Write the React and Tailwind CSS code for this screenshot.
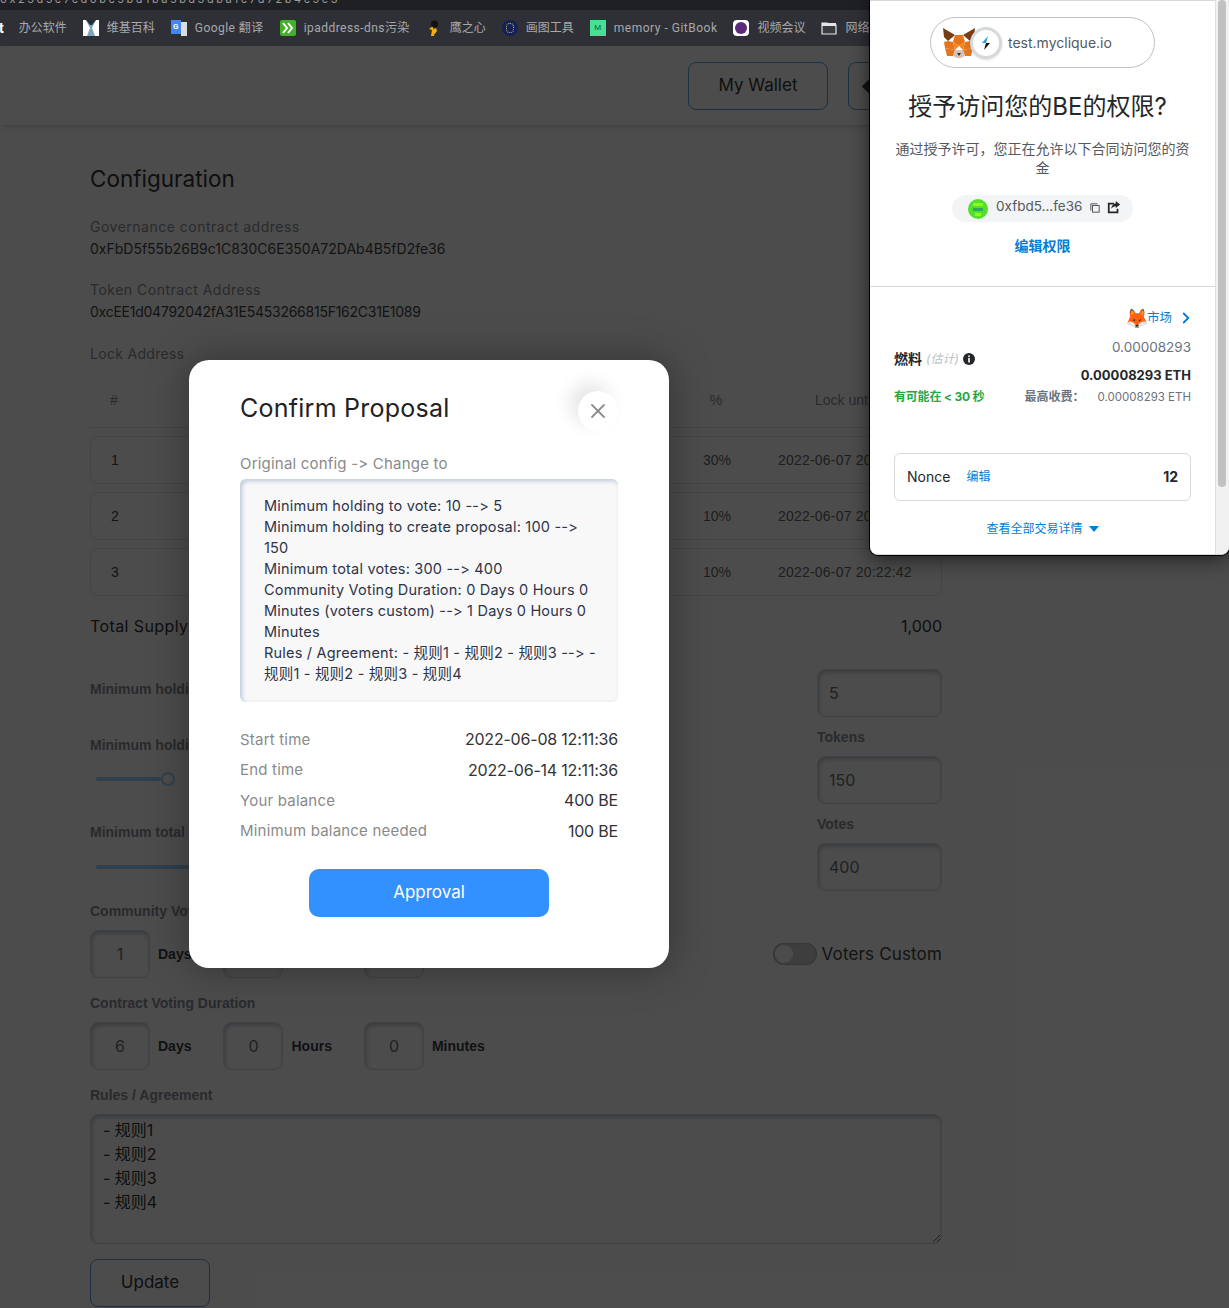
import React from 'react'
import { X, ChevronRight } from 'lucide-react'

const poppins = { fontFamily: 'Inter, "Noto Sans CJK SC", sans-serif', fontVariantLigatures: 'none', fontFeatureSettings: '"calt" 0' }

const Fox = ({ className }) => (
  <svg viewBox="0 0 32 30" className={className}>
    <polygon points="0,0 12,7 5,13 1,9" fill="#763d16" />
    <polygon points="32,0 20,7 27,13 31,9" fill="#763d16" />
    <polygon points="12,7 20,7 22,14 16,18 10,14" fill="#e4761b" />
    <polygon points="5,13 10,14 12,22 2,20 1,14" fill="#e2761b" />
    <polygon points="27,13 22,14 20,22 30,20 31,14" fill="#e2761b" />
    <polygon points="10,14 16,18 12,22" fill="#f6851b" />
    <polygon points="22,14 16,18 20,22" fill="#f6851b" />
    <polygon points="2,20 12,22 10,28 4,28" fill="#e4751f" />
    <polygon points="30,20 20,22 22,28 28,28" fill="#e4751f" />
    <polygon points="10,28 12,22 20,22 22,28 18,30 14,30" fill="#d7c1b3" />
    <polygon points="14,25 18,25 16,28" fill="#233447" />
  </svg>
)

const bookmarks = [
  { label: '办公软件' },
  {
    label: '维基百科',
    icon: (
      <svg viewBox="0 0 16 16" className="w-4 h-4">
        <rect width="16" height="16" fill="#fff" />
        <polygon points="3,0 13,0 9,8 12,16 4,16 7,8" fill="#7fa3b8" />
        <polygon points="3,0 13,0 9,5 7,5" fill="#22303a" />
      </svg>
    ),
  },
  {
    label: 'Google 翻译',
    cls: 'tracking-[0.45px]',
    icon: (
      <span className="w-4 h-4 flex">
        <span className="w-2.5 h-3.5 bg-[#4285f4] text-white text-[8px] font-bold leading-[14px] text-center">G</span>
        <span className="w-1.5 h-3.5 mt-0.5 bg-[#dcdcdc]" />
      </span>
    ),
  },
  {
    label: 'ipaddress-dns污染',
    cls: 'tracking-[0.45px]',
    icon: (
      <svg viewBox="0 0 16 16" className="w-4 h-4">
        <rect width="16" height="16" rx="2" fill="#43b02a" />
        <path d="M3 3l4 5-4 5M8 3l4 5-4 5" fill="none" stroke="#fff" strokeWidth="2" />
      </svg>
    ),
  },
  {
    label: '鹰之心',
    icon: (
      <svg viewBox="0 0 16 16" className="w-4 h-4">
        <path d="M5 16l1-6-3-1 4-3 1 10z" fill="#f5b015" />
        <path d="M6 10l4-2 1 3-3 4z" fill="#f5b015" />
        <circle cx="8.500" cy="4" r="3.500" fill="#111" />
      </svg>
    ),
  },
  {
    label: '画图工具',
    icon: (
      <span className="w-4 h-4 rounded-full bg-[#15205a] flex items-center justify-center">
        <span className="w-2 h-2.5 rounded-full border border-dotted border-[#d8d832]" />
      </span>
    ),
  },
  { label: 'memory - GitBook', cls: 'tracking-[0.5px]', icon: <span className="w-4 h-4 bg-[#45e094] text-[#0d6b3f] text-[8px] leading-4 text-center">M</span> },
  { label: '视频会议', icon: <span className="w-4 h-4 rounded bg-white flex items-center justify-center"><span className="w-3 h-3 rounded-full bg-[#5b2a78]" /></span> },
  {
    label: '网络',
    icon: (
      <svg viewBox="0 0 16 14" className="w-4 h-4">
        <path d="M1 2h5l1.500 2H15v9H1z" fill="#3a3b40" stroke="#e5e5e5" strokeWidth="1.200" />
        <rect x="1" y="2" width="14" height="3" fill="#e5e5e5" />
      </svg>
    ),
  },
]

const rows = [
  { id: 1, pct: '30%', date: '2022-06-07 20:22:42' },
  { id: 2, pct: '10%', date: '2022-06-07 20:22:42' },
  { id: 3, pct: '10%', date: '2022-06-07 20:22:42' },
]

const inputClass =
  'h-12 bg-white border border-[#d8dbe0] rounded-lg shadow-[inset_1px_2px_4px_rgba(90,110,140,0.45)] text-[#6b6f76] text-base outline-none'

const Slider = ({ value }) => (
  <div className="relative h-[14px] w-[560px] ml-[6px] flex items-center">
    <div className="h-1 rounded-full bg-[#9ed4ff]" style={{ width: value }} />
    <div className="w-[14px] h-[14px] rounded-full bg-white border-2 border-[#9ed4ff] shrink-0" />
  </div>
)

const Duration = ({ day, hour, minute }) => (
  <div className="flex items-center gap-8">
    {[
      [day, 'Days'],
      [hour, 'Hours'],
      [minute, 'Minutes'],
    ].map(([val, unit]) => (
      <div key={unit} className="flex items-center gap-2">
        <input readOnly value={val} className={`${inputClass} w-[60px] text-center`} style={poppins} />
        <span className="text-sm font-bold text-[#3a3d4a]" style={{ fontFamily: '"Liberation Sans", sans-serif' }}>
          {unit}
        </span>
      </div>
    ))}
  </div>
)

const Label = ({ children, className = '' }) => (
  <div
    className={`text-sm leading-4 font-bold text-[#8b8e96] ${className}`}
    style={{ fontFamily: '"Liberation Sans", sans-serif' }}
  >
    {children}
  </div>
)

const Page = () => (
  <div className="h-[1262px] bg-white text-[#3a3f4d]" style={poppins}>
    <div className="h-[79px] pl-[688px] pt-4 flex gap-5 shadow-md overflow-hidden">
      <button className="w-[140px] h-12 shrink-0 rounded-lg border border-[#5b9de8] text-[17px] text-[#333]">My Wallet</button>
      <button className="w-[140px] h-12 shrink-0 rounded-lg border border-[#5b9de8] pl-3 text-left">◆</button>
    </div>

    <div className="w-[852px] ml-[90px] pt-[38px]">
      <h1 className="text-[22.500px] leading-8 text-[#333]">Configuration</h1>
      <div className="mt-[22px] text-sm leading-5 text-[#8b8e96] tracking-[0.5px]">Governance contract address</div>
      <div className="mt-0.5 text-sm leading-5 text-[#444]">0xFbD5f55b26B9c1C830C6E350A72DAb4B5fD2fe36</div>
      <div className="mt-[21px] text-sm leading-5 text-[#8b8e96] tracking-[0.5px]">Token Contract Address</div>
      <div className="mt-0.5 text-sm leading-5 text-[#444] tracking-[-0.25px]">0xcEE1d04792042fA31E5453266815F162C31E1089</div>
      <div className="mt-[22px] text-sm leading-5 text-[#8b8e96] tracking-[0.3px]">Lock Address</div>

      <div
        className="mt-[17px] h-[47px] grid grid-cols-[564px_124px_164px] items-center border-b border-[#e8e8e8] pb-2 text-sm text-[#8b8e96]"
        style={{ fontFamily: '"Liberation Sans", sans-serif' }}
      >
        <span className="pl-5">#</span>
        <span className="text-center">%</span>
        <span className="pl-[37px]">Lock until</span>
      </div>
      <div className="mt-2 flex flex-col gap-2" style={{ fontFamily: '"Liberation Sans", sans-serif' }}>
        {rows.map((r) => (
          <div
            key={r.id}
            className="h-12 grid grid-cols-[564px_124px_164px] items-center rounded-lg border border-[#e4e4e4] text-sm text-[#444]"
          >
            <span className="pl-5">{r.id}</span>
            <span className="text-center text-[#666]">{r.pct}</span>
            <span className="-ml-px whitespace-nowrap tracking-[0.2px] text-[#666]">{r.date}</span>
          </div>
        ))}
      </div>

      <div className="mt-[18px] flex justify-between text-base leading-6 text-[#333]">
        <span className="tracking-[0.4px]">Total Supply</span>
        <span>1,000</span>
      </div>

      <div className="mt-[31px] flex justify-between">
        <div>
          <Label className="mt-3">Minimum holding to vote</Label>
          <Label className="mt-10">Minimum holding to create proposal</Label>
          <div className="mt-[19px]">
            <Slider value={65} />
          </div>
          <Label className="mt-[38px]">Minimum total votes</Label>
          <div className="mt-5">
            <Slider value={320} />
          </div>
        </div>
        <div className="w-[125px]">
          <input readOnly value="5" className={`${inputClass} w-full pl-[11px]`} style={poppins} />
          <Label className="mt-3">Tokens</Label>
          <input readOnly value="150" className={`${inputClass} w-full pl-[11px] mt-[11px]`} style={poppins} />
          <Label className="mt-3">Votes</Label>
          <input readOnly value="400" className={`${inputClass} w-full pl-[11px] mt-[11px]`} style={poppins} />
        </div>
      </div>

      <Label className="mt-3">Community Voting Duration</Label>
      <div className="mt-[11px] flex items-center justify-between">
        <Duration day="1" hour="0" minute="0" />
        <div className="flex items-center gap-[5px] text-[17px] text-[#444] tracking-[0.15px]">
          <div className="w-11 h-[22px] rounded-full bg-[#cfcfcf] p-0.5 shadow-[inset_0_0_2px_rgba(0,0,0,0.4)]">
            <div className="w-[18px] h-[18px] rounded-full bg-white" />
          </div>
          <span className="pt-[2px]">Voters Custom</span>
        </div>
      </div>

      <Label className="mt-[17px]">Contract Voting Duration</Label>
      <div className="mt-[11px]">
        <Duration day="6" hour="0" minute="0" />
      </div>

      <Label className="mt-[17px]">Rules / Agreement</Label>
      <textarea
        readOnly
        value={'- 规则1\n- 规则2\n- 规则3\n- 规则4'}
        className={`${inputClass} block mt-[11px] w-full h-[130px] px-3 pt-[3px] leading-6 text-[#333]`}
        style={poppins}
      />
      <button className="mt-[15px] w-[120px] h-12 rounded-lg border border-[#5b9de8] text-[17px] text-[#333]">Update</button>
    </div>
  </div>
)

const Modal = () => (
  <div
    className="absolute left-[189px] top-[314px] w-[480px] h-[608px] bg-white rounded-[20px] px-[51px] pt-[30px] shadow-[0_0_40px_rgba(0,0,0,0.35)]"
    style={poppins}
  >
    <div className="flex items-start justify-between">
      <h2 className="text-[25px] leading-9 tracking-[0.25px] text-[#222]">Confirm Proposal</h2>
      <div className="w-10 h-10 mt-[1px] rounded-full bg-white flex items-center justify-center shadow-[-8px_-8px_18px_rgba(0,0,0,0.1)]">
        <X size={24} strokeWidth={1.8} className="text-[#8c8c8c]" />
      </div>
    </div>
    <div className="mt-[23px] text-[15px] leading-5 text-[#8a8a8a] tracking-[0.2px]">Original config -&gt; Change to</div>
    <div className="mt-[5px] h-[223px] bg-[#f8f8f9] rounded-md pl-6 pr-[22px] pt-4 text-[14.500px] leading-[21px] tracking-[0.2px] text-[#2e3448] shadow-[inset_2px_2px_4px_rgba(100,130,170,0.4)]">
      Minimum holding to vote: 10 --&gt; 5
      <br />
      Minimum holding to create proposal: 100 --&gt; 150
      <br />
      Minimum total votes: 300 --&gt; 400
      <br />
      Community Voting Duration: 0 Days 0 Hours 0 Minutes (voters custom) --&gt; 1 Days 0 Hours 0 Minutes
      <br />
      Rules / Agreement: - 规则1 - 规则2 - 规则3 --&gt; - 规则1 - 规则2 - 规则3 - 规则4
    </div>
    <div className="mt-[26px] flex flex-col gap-[6.500px]">
      {[
        ['Start time', '2022-06-08 12:11:36'],
        ['End time', '2022-06-14 12:11:36'],
        ['Your balance', '400 BE'],
        ['Minimum balance needed', '100 BE'],
      ].map(([k, v]) => (
        <div key={k} className="flex justify-between items-center h-6">
          <span className="text-[15px] text-[#8a8a8a] tracking-[0.2px]">{k}</span>
          <span className="pb-[2px] text-base tracking-[-0.2px] text-[#333]">{v}</span>
        </div>
      ))}
    </div>
    <button className="block mx-auto mt-[25px] w-[240px] h-12 rounded-[10px] bg-[#3390ff] text-white text-[17px]">Approval</button>
  </div>
)

const WalletPopup = () => (
  <div
    className="absolute right-0 top-0 w-[359px] h-[555px] bg-white rounded-b-lg overflow-hidden flex shadow-[0_0_0_1px_#000,0_4px_20px_rgba(0,0,0,0.6)] border-b border-[#d6d9dc]"
    style={{ fontFamily: 'Inter, "Noto Sans CJK SC", sans-serif' }}
  >
    <div className="w-[345px] border-t border-[#d6d9dc] shrink-0 flex flex-col">
      <div className="h-[286px] border-b border-[#d6d9dc] flex flex-col items-center pt-4">
        <div className="w-[225px] h-[51px] rounded-full border border-[#bbc0c5] flex items-center pl-3">
          <Fox className="w-8 h-[30px]" />
          <div className="w-8 h-8 -ml-[5px] rounded-full bg-white border-[3px] border-[#d6d9dc] shadow flex items-center justify-center">
            <svg viewBox="0 0 16 16" className="w-4 h-4">
              <polygon points="10,1 4,8 8,8" fill="#1c9bf0" />
              <polygon points="8,8 12,8 6,15" fill="#111" />
            </svg>
          </div>
          <span className="ml-[6px] text-sm text-[#535a61]">test.myclique.io</span>
        </div>
        <h3 className="mt-[23px] pr-[10px] text-2xl leading-8 text-[#24272a]">授予访问您的BE的权限?</h3>
        <p className="mt-4 w-[296px] text-center text-sm leading-[19px] text-[#535a61]">
          通过授予许可，您正在允许以下合同访问您的资金
        </p>
        <div className="mt-[18px] w-[181px] h-[27px] rounded-full bg-[#f2f4f6] flex items-center pl-4">
          <svg viewBox="0 0 20 20" className="w-5 h-5">
            <circle cx="10" cy="10" r="10" fill="#52e02c" />
            <rect x="5" y="4" width="10" height="3" fill="#8dfa1e" />
            <rect x="5" y="9" width="10" height="3" fill="#2ea85c" />
            <rect x="7" y="14" width="6" height="3" fill="#8dfa1e" />
          </svg>
          <span className="ml-2 -mt-1 text-[13.500px] text-[#535a61]">0xfbd5...fe36</span>
          <svg viewBox="0 0 12 12" className="ml-2 -mt-px w-[10px] h-[10px]" fill="none" stroke="#535a61" strokeWidth="1.200">
            <rect x="3" y="3" width="8" height="8" />
            <path d="M1 9V1h8" />
          </svg>
          <svg viewBox="0 0 16 16" className="ml-[7px] -mt-1 w-[14px] h-[14px]" fill="#24272a">
            <path d="M1 3h7v2H3v8h8v-3h2v5H1z" />
            <path d="M10 1l5 4-5 4V7c-2 0-4 1-5 3 0-3 2-6 5-6z" />
          </svg>
        </div>
        <div className="mt-[14px] text-sm font-bold leading-5 text-[#037dd6]">编辑权限</div>
      </div>

      <div className="px-6 flex-1">
        <div className="mt-[21px] h-5 flex items-center justify-end text-[12.500px] text-[#037dd6]">
          <span className="-mr-[2px] text-[19px] leading-none">🦊</span>
          <span>市场</span>
          <ChevronRight size={18} strokeWidth={2.4} className="ml-[5px] -mr-[4px]" />
        </div>
        <div className="mt-[9px] flex items-center justify-between">
          <div className="flex items-center text-sm font-bold text-[#24272a] pb-1">
            燃料
            <span className="ml-1 text-xs italic font-normal text-[#bbc0c5]">(估计)</span>
            <svg viewBox="0 0 12 12" className="ml-1 w-3 h-3">
              <circle cx="6" cy="6" r="6" fill="#24272a" />
              <rect x="5.200" y="5" width="1.600" height="4.500" fill="#fff" />
              <rect x="5.200" y="2.500" width="1.600" height="1.600" fill="#fff" />
            </svg>
          </div>
          <div className="text-right">
            <div className="text-[13.500px] leading-5 text-[#6a737d]">0.00008293</div>
            <div className="mt-2 text-[13px] leading-5 font-bold text-[#24272a]">0.00008293 ETH</div>
          </div>
        </div>
        <div className="mt-[2px] flex items-center justify-between text-xs leading-5">
          <span className="font-bold text-[#28a745] tracking-[-0.2px]">有可能在 &lt; 30 秒</span>
          <span className="text-[#6a737d]">
            <span className="font-bold">最高收费：</span>
            <span className="ml-[13px] text-[11.500px]">0.00008293 ETH</span>
          </span>
        </div>
        <div className="mt-[46px] h-12 rounded-md border border-[#d6d9dc] flex items-center px-3 text-sm text-[#24272a]">
          Nonce
          <span className="ml-4 text-xs text-[#037dd6]">编辑</span>
          <span className="ml-auto font-bold">12</span>
        </div>
        <div className="mt-[18px] flex items-center justify-center text-xs leading-5 text-[#037dd6]">
          查看全部交易详情
          <svg viewBox="0 0 10 6" className="ml-[6px] w-[10px] h-[6px]" fill="#037dd6">
            <polygon points="0,0 10,0 5,6" />
          </svg>
        </div>
      </div>
    </div>
    <div className="flex-1 bg-[#f1f1f1] border-l border-[#e0e0e0] px-[2px]">
      <div className="h-[487px] w-2 rounded-full bg-[#c1c1c1]" />
    </div>
  </div>
)

export default function App() {
  return (
    <div className="relative w-full h-[1308px] overflow-hidden">
      <div className="h-[10px] bg-[#1f2024] overflow-hidden">
        <div className="-mt-[8px] text-[11px] leading-[14px] text-[#9a9a9a] tracking-[2.500px] whitespace-nowrap" style={{ fontFamily: 'Inter, sans-serif' }}>
          0x23d5c7cd0bc5bd1ba5bd3dba1c7d72b4c9e3
        </div>
      </div>
      <div
        className="h-9 bg-[#2f3036] flex items-center gap-4 text-xs text-[#a7a8ab] whitespace-nowrap overflow-hidden"
        style={{ fontFamily: 'Roboto, "Noto Sans CJK SC", sans-serif' }}
      >
        <span className="-ml-[1px] -mr-px text-sm font-bold text-white">t</span>
        {bookmarks.map((b) => (
          <div key={b.label} className="flex items-center gap-2 shrink-0">
            {b.icon}
            <span className={b.cls}>{b.label}</span>
          </div>
        ))}
      </div>

      <div className="relative">
        <Page />
        <div className="absolute inset-0 bg-black/70" />
        <Modal />
      </div>

      <WalletPopup />
    </div>
  )
}
